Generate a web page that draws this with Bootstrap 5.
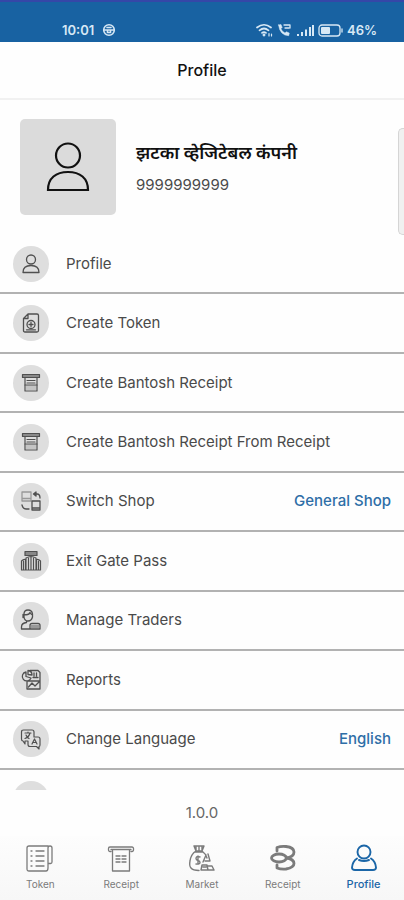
<!DOCTYPE html>
<html lang="en">
<head>
<meta charset="utf-8">
<meta name="viewport" content="width=device-width, initial-scale=1">
<title>Profile</title>
<link href="https://cdn.jsdelivr.net/npm/bootstrap@5.3.0/dist/css/bootstrap.min.css" rel="stylesheet">
<style>
body { font-family: Inter, "Noto Sans", sans-serif; background: #fefefe; color: #4a4a4a; }
svg { fill: none; stroke: currentColor; stroke-linecap: round; stroke-linejoin: round; flex: none; }
.status-bar { height: 42px; background: #1862a2; border-top: 2px solid #3547a8; color: #d7e8f5; padding: 16px 27px 0 62px; font: 600 13px/24px Inter, sans-serif; }
.title-bar { height: 58px; border-bottom: 2px solid #f1f1f1; }
.title-bar h1 { font-size: 16px; line-height: 24px; font-weight: 500; color: #111; }
.owner { height: 135px; padding: 19px 0 0 20px; }
.avatar { width: 96px; height: 96px; border-radius: 5px; background: #dbdbdb; color: #111; }
.owner h2 { font-size: 18px; line-height: 28px; font-weight: 600; color: #111; }
.phone { font-size: 15px; line-height: 20px; color: #4a4a4a; }
.side-card { width: 6px; height: 107px; margin-top: 9px; border: 1px solid #d5d5d5; border-right: 0; border-radius: 5px 0 0 5px; background: #f0f0f0; }
.menu-row { flex: 1 1 0; min-height: 44px; padding: 0 13px; border-bottom: 2px solid #b2b2b2; font-size: 15px; line-height: 20px; color: #4a4a4a; }
.menu-row.peek { flex: 0 0 20px; min-height: 0; padding-top: 11px; border: 0; }
.disc { width: 36px; height: 36px; flex: none; border-radius: 50%; background: #dedede; color: #505050; margin-right: 17px; }
.chosen { color: #2e6ea7; font-weight: 500; }
.version { height: 46px; font-size: 15px; line-height: 20px; color: #666; }
.tab-bar { height: 64px; background: linear-gradient(#fdfdfd, #f7f7f7); padding-top: 8px; }
.tab-bar a { color: #7b7b7b; font-size: 10px; line-height: 14px; gap: 3px; }
.tab-bar a.active { color: #1b66a7; font-size: 11px; font-weight: 500; }
</style>
<script src="https://cdn.jsdelivr.net/npm/bootstrap@5.3.0/dist/js/bootstrap.bundle.min.js"></script>
</head>
<body class="d-flex flex-column min-vh-100">
<svg class="d-none" aria-hidden="true">
  <symbol id="receipt" viewBox="0 0 28 28">
    <path d="M4 6.500H3a1.500 1.500 0 0 1-1.500-1.500V3.500A1.500 1.500 0 0 1 3 2h22a1.500 1.500 0 0 1 1.500 1.500V5A1.500 1.500 0 0 1 25 6.500h-1M4 4.500h20M5.500 4.500V26h17V4.500M9 11h4M15 11h4M9 14h4M15 14h4M9 17h4M15 17h4"/>
  </symbol>
  <symbol id="slip" viewBox="0 0 20 20">
    <path d="M1.500 1.500h17v3h-17Z" fill="#8a8a8a"/>
    <path d="M4 4.500V18h12V4.500M6 7.500h8M6 10h8"/>
    <path d="M5 12h10v5H5Z" fill="#c4c4c4" stroke="none"/>
    <path d="M4 12h12"/>
  </symbol>
</svg>

<div class="status-bar d-flex align-items-center">
  <span>10:01</span>
  <svg class="ms-2" width="14" height="14" viewBox="0 0 14 14" stroke-width="1.600"><circle cx="7" cy="7" r="5.300"/><path d="M2 7h10M5 4.500h4M5.500 7v2.500h3V7"/></svg>
  <svg class="ms-auto" width="17" height="14" viewBox="0 0 17 14" stroke-width="1.700"><path d="M1 4.500q7-5.500 14 0M3.500 7.300q4.500-3.600 9 0M6 9.900q2-1.600 4 0"/><circle cx="8" cy="12" r=".6"/><path d="M13 10.500v2.500M15.500 11v2" stroke-width="1.200"/></svg>
  <svg class="ms-1" width="15" height="14" viewBox="0 0 15 14" stroke-width="1.300"><path d="M1.500 2 4 1.500l1.200 3-1.300 1.300q1.300 3 4.100 4.300l1.400-1.300 2.900 1.300-.6 2.600Q3 12.500 1.500 2Z" fill="currentColor" stroke-width=".5"/><path d="M7 2h6M8 5h4M13 2v3"/></svg>
  <svg class="ms-1" width="18" height="14" viewBox="0 0 18 14" stroke-width="2"><path d="M2 13v-2M6 13V9M10 13V6.500M14 13V4M17 13V2" stroke-linecap="butt"/></svg>
  <svg class="ms-1 me-1" width="25" height="13" viewBox="0 0 25 13" stroke-width="1.300"><rect x="1" y="1" width="21" height="11" rx="3"/><path d="M24 5v3"/><rect x="3" y="3" width="9" height="7" rx="1" fill="currentColor" stroke="none"/></svg>
  <span>46%</span>
</div>

<header class="title-bar d-flex align-items-center justify-content-center"><h1 class="m-0">Profile</h1></header>

<section class="owner d-flex align-items-start">
  <div class="avatar d-flex align-items-center justify-content-center">
    <svg width="44" height="52" viewBox="0 0 44 52" stroke-width="2.200"><circle cx="22" cy="14.500" r="12"/><path d="M2 49c0-12 8-18 20-18s20 6 20 18Z" stroke-linejoin="miter"/></svg>
  </div>
  <div class="ps-3 ms-1 pt-3 mt-1">
    <h2 class="mb-2" lang="mr">झटका व्हेजिटेबल कंपनी</h2>
    <div class="phone">9999999999</div>
  </div>
  <div class="side-card ms-auto"></div>
</section>

<main class="d-flex flex-column flex-grow-1">
  <a href="#profile" class="menu-row d-flex align-items-center text-decoration-none">
    <span class="disc d-flex align-items-center justify-content-center"><svg width="20" height="20" viewBox="0 0 20 20" stroke-width="1.300"><circle cx="10" cy="5.500" r="4.500"/><path d="M2 18.500q0-7 8-7t8 7Z"/></svg></span>Profile</a>
  <a href="#token" class="menu-row d-flex align-items-center text-decoration-none">
    <span class="disc d-flex align-items-center justify-content-center"><svg width="20" height="20" viewBox="0 0 20 20" stroke-width="1.300"><path d="M7 1h9q1.500 0 1.500 1.500v15q0 1.500-1.500 1.500H4Q2.500 19 2.500 17.500V5.500ZM7 1v4.500H2.500"/><circle cx="10" cy="11.500" r="4"/><path d="M10 9.500v4M8 11.500h4M5.500 16.800h9"/></svg></span>Create Token</a>
  <a href="#bantosh" class="menu-row d-flex align-items-center text-decoration-none">
    <span class="disc d-flex align-items-center justify-content-center"><svg width="20" height="20" stroke-width="1.200"><use href="#slip"/></svg></span>Create Bantosh Receipt</a>
  <a href="#from-receipt" class="menu-row d-flex align-items-center text-decoration-none">
    <span class="disc d-flex align-items-center justify-content-center"><svg width="20" height="20" stroke-width="1.200"><use href="#slip"/></svg></span>Create Bantosh Receipt From Receipt</a>
  <a href="#shop" class="menu-row d-flex align-items-center text-decoration-none">
    <span class="disc d-flex align-items-center justify-content-center"><svg width="22" height="22" viewBox="0 0 22 22" stroke-width="1.300"><path d="M2 2h9v9H2ZM2 8.500h9" stroke="#999"/><path d="M12 11h8v9h-8ZM12 18h8M14 4h3q3 0 3 4M16 2l-2.500 2L16 6ZM9 19H6q-3 0-4-4"/></svg></span>Switch Shop<span class="chosen ms-auto">General Shop</span></a>
  <a href="#gate" class="menu-row d-flex align-items-center text-decoration-none">
    <span class="disc d-flex align-items-center justify-content-center"><svg width="22" height="22" viewBox="0 0 22 22" stroke-width="1.200"><path d="M5 1.500h12v4H5Z" fill="#888"/><path d="M1.500 20v-9q2-2 4-1.500V20ZM16.500 20V9.500q2-.5 4 1.500v9ZM6 20V8q5-3 10 0v12M11 7v13M8.500 8v11M13.500 8v11M3.500 11v8M18.500 11v8M2 20h18"/></svg></span>Exit Gate Pass</a>
  <a href="#traders" class="menu-row d-flex align-items-center text-decoration-none">
    <span class="disc d-flex align-items-center justify-content-center"><svg width="22" height="22" viewBox="0 0 22 22" stroke-width="1.300"><path d="M4 7V5q0-4 4-4t4.500 4v3q-1 4-4.500 4T4 8ZM4 5.500q5 1 6-2 1 2 2.500 2.500M3 5.500v3M6.500 12v1.500Q1.500 14 1.500 18v2H20v-3.500q0-2-2-2h-6q-2 0-2 2V20"/><path d="M11 16h8v3h-8Z" fill="#999" stroke="none"/></svg></span>Manage Traders</a>
  <a href="#reports" class="menu-row d-flex align-items-center text-decoration-none">
    <span class="disc d-flex align-items-center justify-content-center"><svg width="22" height="22" viewBox="0 0 22 22" stroke-width="1.300"><path d="M10 1.500h8l2 2V20H7v-7M6 3a4.500 4.500 0 1 0 5 6L6 7.500ZM8 1.500Q12 2 12 6l-4-.5ZM14 4v3M16.500 4v3M13 8.500h5M7 12h13M8.500 18l3.500-4 3 3 4-4"/></svg></span>Reports</a>
  <a href="#language" class="menu-row d-flex align-items-center text-decoration-none">
    <span class="disc d-flex align-items-center justify-content-center"><svg width="22" height="22" viewBox="0 0 22 22" stroke-width="1.200"><path d="M8 13H5v3l-2-3q-1.500 0-1.500-2V4q0-2 2-2H12q2 0 2 2v5M5 5h6M8 4v1M10 5q-1 4-5 5.500M6 7q1 2.500 3 3.500M14 9h4q2 0 2 2v6q0 1.500-1 1.500V21l-2.500-2.500H10q-2 0-2-2V13M12 16l2.500-5 2.500 5M13 14.500h3"/></svg></span>Change Language<span class="chosen ms-auto">English</span></a>
  <a href="#more" class="menu-row peek d-flex align-items-start overflow-hidden" aria-label="More"><span class="disc"></span></a>
</main>

<div class="version d-flex align-items-center justify-content-center">1.0.0</div>

<nav class="tab-bar d-flex">
  <a href="#tokens" class="d-flex flex-column align-items-center text-decoration-none col"><svg width="28" height="30" viewBox="0 0 28 30" stroke-width="1.300"><path d="M22 4v20q0 3-2 3H3q-2 0-2-2V4q0-2 2-2h19M22 4q0-2 2-2t2 2v14q0 1.500-1.500 1.500H22M10 7h8M10 12h8M10 17h8M10 22h8M5 7h1M5 12h1M5 17h1M5 22h1"/></svg>Token</a>
  <a href="#receipts" class="d-flex flex-column align-items-center text-decoration-none col"><svg width="28" height="30" stroke-width="1.300"><use href="#receipt"/></svg>Receipt</a>
  <a href="#market" class="d-flex flex-column align-items-center text-decoration-none col"><svg width="28" height="30" viewBox="0 0 28 30" stroke-width="1.400"><path d="M6 2h10l-2 5H8ZM8 7Q3 10 2 17q-1 5 1 7 2 2.500 8 2.500M14 7q4 3 5 7M7 8h8M8 3v3M11 3v3M14 3v3M10 12v8M12 13q-4-1.500-4 1.500 0 1.500 2 2t2 2q0 2-4 1.500M18 11l-3 7M20 10l2 7M17 17h5M13 26l1-5h5l1 5ZM20 26l-1-4h5l2 4ZM15 23h3"/></svg>Market</a>
  <a href="#receipt-log" class="d-flex flex-column align-items-center text-decoration-none col"><svg width="28" height="30" viewBox="0 0 28 30" stroke-width="2.800" stroke="#5c5c5c"><ellipse cx="10" cy="14" rx="7.500" ry="4"/><path d="M8 7V3.500q4-1.500 9-1 8 1 8 5.500 0 5-8 6M17 14q8 1 8 5.500 0 4-8 5.500-5 .5-9-1V21"/></svg>Receipt</a>
  <a href="#me" class="active d-flex flex-column align-items-center text-decoration-none col" aria-current="page"><svg width="28" height="30" viewBox="0 0 28 30" stroke-width="1.900"><circle cx="14" cy="8" r="6.500"/><path d="M7 14.500q-4.500 3-5 9Q2 26 5 26h18q3 0 3-2.500-.5-6-5-9M9 16q5 2 10 0"/></svg>Profile</a>
</nav>
</body>
</html>
